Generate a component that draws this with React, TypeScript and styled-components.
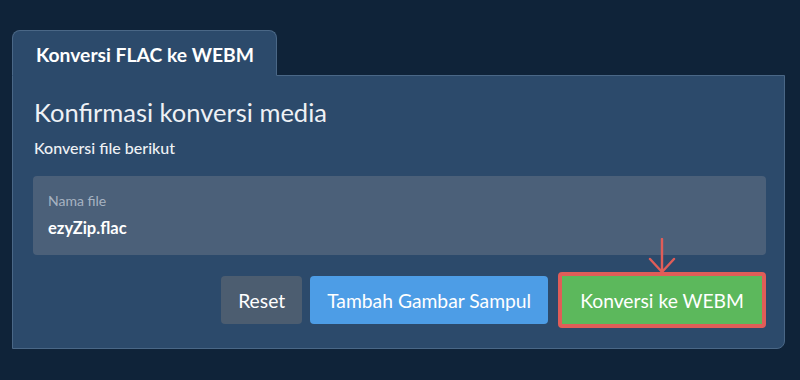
import React from "react";
import styled, { createGlobalStyle } from "styled-components";

const GlobalStyle = createGlobalStyle`
  html, body {
    margin: 0;
    padding: 0;
    background: #0f2339;
  }
  body {
    font-family: Lato, "Noto Sans", sans-serif;
    color: #f2f4f7;
  }
`;

export default function App() {
  return (
    <>
      <GlobalStyle />
      <Page>
        <Tab>Konversi FLAC ke WEBM</Tab>
        <Panel>
          <Heading>Konfirmasi konversi media</Heading>
          <SubTitle>Konversi file berikut</SubTitle>
          <FileBox>
            <FileLabel>Nama file</FileLabel>
            <FileName>ezyZip.flac</FileName>
          </FileBox>
          <ButtonRow>
            <Button $bg="#4c5d70">Reset</Button>
            <Button $bg="#4d9de6">Tambah Gambar Sampul</Button>
            <Highlight>
              <Arrow width="30" height="36" viewBox="0 0 30 36">
                <path
                  d="M15 1 V34 M3 21 L15 34 L27 21"
                  fill="none"
                  stroke="#e05d58"
                  strokeWidth="2.4"
                  strokeLinecap="round"
                  strokeLinejoin="round"
                />
              </Arrow>
              <Button $bg="#5cb85c">Konversi ke WEBM</Button>
            </Highlight>
          </ButtonRow>
        </Panel>
      </Page>
    </>
  );
}

const Page = styled.div`
  display: flex;
  flex-direction: column;
  align-items: flex-start;
  padding: 30px 15px 0 12px;
`;

const Tab = styled.div`
  position: relative;
  z-index: 1;
  width: 265px;
  height: 46px;
  box-sizing: border-box;
  display: flex;
  align-items: center;
  padding: 2px 0 0 23px;
  margin-bottom: -1px;
  background: #2c4a6b;
  border: 1px solid #4a6786;
  border-bottom: 1px solid #2c4a6b;
  border-radius: 8px 8px 0 0;
  font-size: 19.3px;
  font-weight: 700;
  color: #ffffff;
`;

const Panel = styled.div`
  width: 773px;
  box-sizing: border-box;
  padding: 21px 18px 20px 21px;
  background: #2c4a6b;
  border: 1px solid #4a6786;
  border-radius: 0 0 8px 0;
  display: flex;
  flex-direction: column;
`;

const Heading = styled.h1`
  margin: 0;
  font-size: 25.5px;
  font-weight: 400;
  line-height: 1.2;
  color: #eef1f5;
`;

const SubTitle = styled.div`
  margin-top: 10px;
  font-size: 16px;
  font-weight: 500;
  line-height: 1.2;
  color: #eef1f5;
`;

const FileBox = styled.div`
  margin: 19px 0 0 -1px;
  padding: 17px 15px 17px;
  background: #4b6079;
  border-radius: 4px;
  display: flex;
  flex-direction: column;
`;

const FileLabel = styled.div`
  font-size: 14px;
  line-height: 1.2;
  color: #a7b3c2;
`;

const FileName = styled.div`
  margin-top: 9px;
  font-size: 16.5px;
  font-weight: 700;
  line-height: 1.2;
  color: #ffffff;
`;

const ButtonRow = styled.div`
  margin-top: 17px;
  display: flex;
  justify-content: flex-end;
  align-items: center;
  gap: 8px;
`;

const Button = styled.button<{ $bg: string }>`
  height: 48px;
  padding: 0 17px;
  border: none;
  border-radius: 4px;
  background: ${(p) => p.$bg};
  color: #ffffff;
  font-family: Lato, "Noto Sans", sans-serif;
  font-size: 19.3px;
  font-weight: 400;
  cursor: pointer;
`;

const Highlight = styled.div`
  position: relative;
  display: flex;
  margin-left: 2px;
  border: 4px solid #e05d58;
  border-radius: 4px;

  & > button {
    border-radius: 0;
    padding: 0 18px;
  }
`;

const Arrow = styled.svg`
  position: absolute;
  left: 50%;
  bottom: 100%;
  margin-left: -15px;
  margin-bottom: 2px;
`;
